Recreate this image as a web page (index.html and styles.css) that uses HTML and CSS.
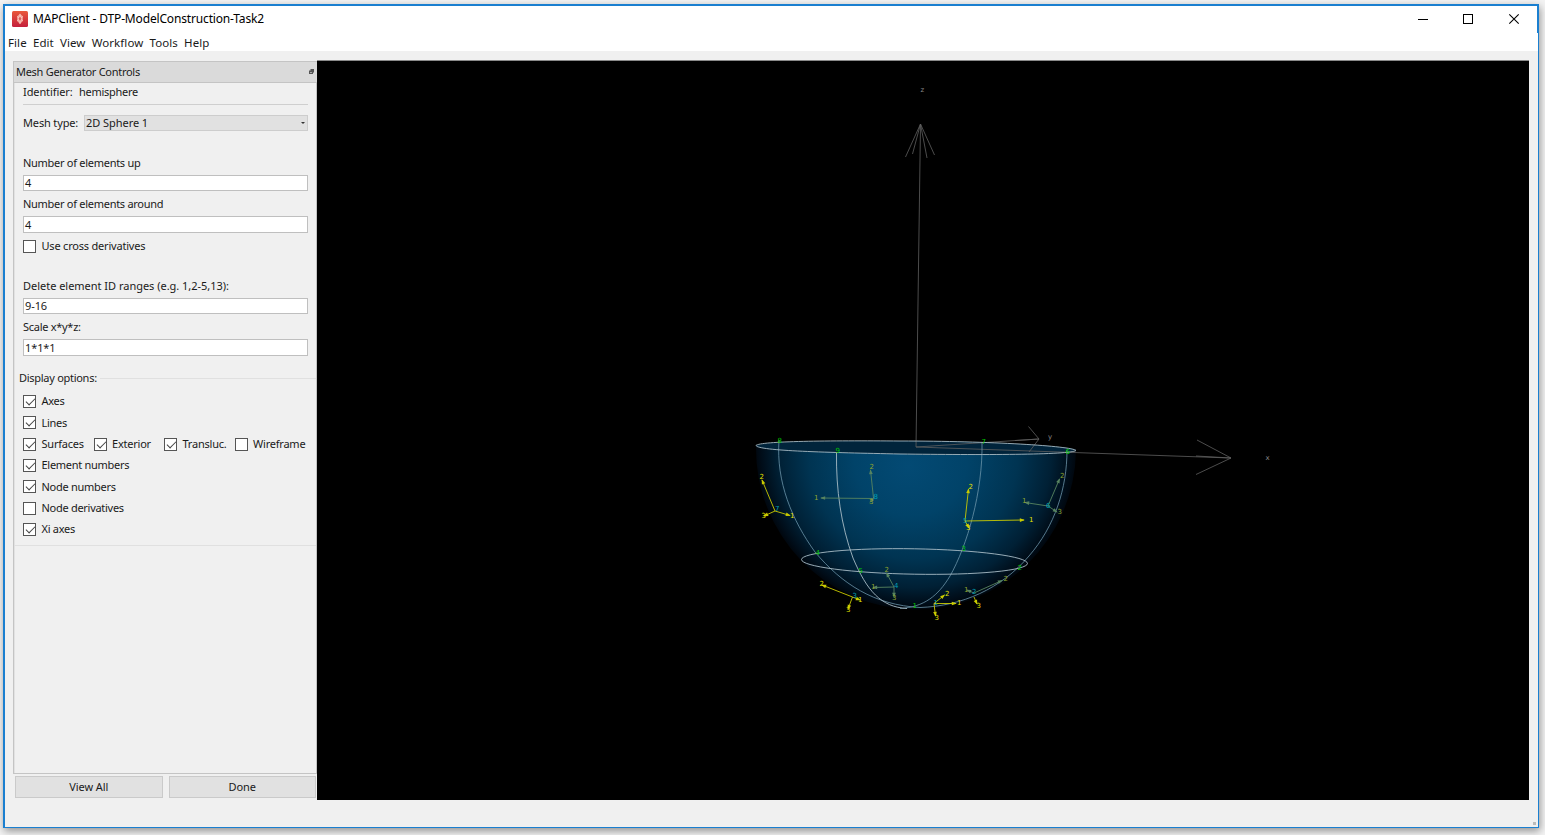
FILE: index.html
```html
<!DOCTYPE html>
<html lang="en">
<head>
<meta charset="utf-8">
<title>MAPClient - DTP-ModelConstruction-Task2</title>
<link rel="stylesheet" href="styles.css">
</head>
<body>
<div class="window">
  <header class="titlebar">
    <svg class="app-icon" width="16" height="16" viewBox="0 0 16 16">
      <defs><linearGradient id="appfill" x1="0" y1="0" x2="0" y2="1"><stop offset="0" stop-color="#e9583a"/><stop offset="1" stop-color="#c4203c"/></linearGradient></defs>
      <rect width="16" height="16" rx="1.5" fill="url(#appfill)"/>
      <path d="M8 2.8 L10.8 5.2 V10 L8 13 L5.2 10 V5.2 Z" fill="#f5a79b"/>
      <path d="M8 2.8 V13 M5.2 5.5 L10.8 9.8 M10.8 5.5 L5.2 9.8" stroke="#fbd5ce" stroke-width=".7"/>
      <ellipse cx="8" cy="7.7" rx=".8" ry="1.8" fill="#d23c3a"/>
    </svg>
    <span class="title">MAPClient - DTP-ModelConstruction-Task2</span>
    <svg class="controls" width="103" height="12" viewBox="0 0 103 12" fill="none" stroke="#000">
      <path d="M0 6.5 H10"/>
      <rect x="45.5" y="1.5" width="9" height="9"/>
      <path d="M91.3 1.3 L100.7 10.7 M100.7 1.3 L91.3 10.7" stroke-width="1.1"/>
    </svg>
  </header>
  <nav class="menubar"><span>File</span><span>Edit</span><span>View</span><span>Workflow</span><span>Tools</span><span>Help</span></nav>
  <main class="content">
    <aside class="dock">
      <div class="dock-title"><span>Mesh Generator Controls</span>
        <svg width="5" height="5" viewBox="0 0 5 5"><path d="M1.5 0 H5 V3.5 H4 V5 H0 V1.5 H1.5 Z" fill="#555"/><path d="M1 3h2v1H1z" fill="#aaa"/></svg>
      </div>
      <div class="panel">
        <div class="row first"><span class="ident-label">Identifier:</span><span>hemisphere</span></div>
        <div class="rule"></div>
        <div class="row mesh-row"><span class="mesh-label">Mesh type:</span><div class="combo"><span>2D Sphere 1</span><i></i></div></div>
        <div class="row spaced">Number of elements up</div>
        <div class="field">4</div>
        <div class="row after">Number of elements around</div>
        <div class="field tall">4</div>
        <div class="row after"><i class="box"></i>Use cross derivatives</div>
        <div class="row spaced wide">Delete element ID ranges (e.g. 1,2-5,13):</div>
        <div class="field">9-16</div>
        <div class="row after">Scale x*y*z:</div>
        <div class="field tall">1*1*1</div>
        <div class="group-title"><span>Display options:</span><i></i></div>
        <div class="options">
          <div class="opt"><i class="box on"></i>Axes</div>
          <div class="opt"><i class="box on"></i>Lines</div>
          <div class="opt quad"><span><i class="box on"></i>Surfaces</span><span><i class="box on"></i>Exterior</span><span><i class="box on"></i>Transluc.</span><span><i class="box"></i>Wireframe</span></div>
          <div class="opt"><i class="box on"></i>Element numbers</div>
          <div class="opt"><i class="box on"></i>Node numbers</div>
          <div class="opt"><i class="box"></i>Node derivatives</div>
          <div class="opt"><i class="box on"></i>Xi axes</div>
        </div>
      </div>
      <div class="buttons"><div class="btn">View All</div><div class="btn">Done</div></div>
    </aside>
    <section class="viewport">
      <svg class="scene" width="1212" height="739" viewBox="317 61 1212 739">
        <defs>
          <radialGradient id="bowl" gradientUnits="userSpaceOnUse" cx="916" cy="448" r="161" fx="908" fy="466">
            <stop offset="0" stop-color="#034a74"/><stop offset=".35" stop-color="#014369"/><stop offset=".65" stop-color="#003452"/><stop offset=".85" stop-color="#002035"/><stop offset=".96" stop-color="#000d19"/><stop offset="1" stop-color="#00060d"/>
          </radialGradient>
          <marker id="tip" viewBox="0 0 6 6" refX="5" refY="3" markerWidth="6" markerHeight="5" orient="auto" markerUnits="userSpaceOnUse"><path d="M0 .8 L6 3 L0 5.200Z" fill="context-stroke"/></marker>
        </defs>
        <path d="M756 446 A160 161 0 0 0 1076 451 C1050 455 980 455 900 454 C830 452 770 451 756 446Z" fill="url(#bowl)"/>
        <path d="M756 446 C760 441 830 441 900 441 C990 441 1070 446 1076 450 C1066 455 980 455 900 454 C830 452 760 451 756 446Z" fill="#01243b"/>
        <g class="axes">
          <path d="M916 447 L920.5 124"/>
          <path d="M905.500 157 L920.500 124 L934.500 155 M912.500 154 L920.500 124 L927 158"/>
          <path d="M916 447 L1231 458"/>
          <path d="M1197 440 L1231 458 L1196 474.500 M1196 456 L1231 458"/>
          <path d="M916 447 L1039 439"/>
          <path d="M1028.500 426.500 L1039 439 L1029 452 M1015 440.500 L1039 439"/>
        </g>
        <g class="axis-text"><text x="920.500" y="92">z</text><text x="1265.500" y="460">x</text><text x="1048" y="439">y</text></g>
        <g class="back">
          <path d="M779 440 C776 482 792 520 815 552 C842 584 874 605 920 607.500 C962 606 1001 589 1029 556 C1055 526 1067 488 1067 450"/>
          <path d="M982 442 C983 492 967 546 950 576 C938 596 924 607 900 608.500"/>
        </g>
        <g class="lines">
          <path d="M836.500 452 C836 490 841 525 853 558 C867 591 881 607 907 608.500"/>
          <path d="M756 445.500 C760 441 830 440.500 900 441 C990 441 1072 446 1076 450.500 C1070 455 980 455 900 454 C830 452.500 758 451 756 445.500Z"/>
          <ellipse cx="914.500" cy="561.500" rx="113" ry="12.700" transform="rotate(1 914.500 561)"/>
        </g>
        <g class="xi dim">
          <path d="M873.500 498 L870.500 470"/><path d="M873.500 498.500 L821 498"/><path d="M873.500 498 L870 502"/>
          <path d="M1048 506 L1059.500 479"/><path d="M1048 506 L1025 502.500"/><path d="M1048 506 L1057 512"/>
          <path d="M894 587 L886.500 573"/><path d="M894 587 L873 587.500"/><path d="M894 587 V597"/>
          <path d="M974 593 L1002 580.500"/><path d="M974 593 L967 590"/>
        </g>
        <g class="xi">
          <path d="M775 511 L762 480"/><path d="M775 511 L790 515.500"/><path d="M775 511 L764 516"/>
          <path d="M965 521 L968.500 489"/><path d="M965 521 L1024 520"/><path d="M965 521 L969 528"/>
          <path d="M852.500 597 L822 585"/><path d="M852.500 597 L860 600"/><path d="M852.500 597 L848 609"/>
          <path d="M934 603.500 L944.500 595"/><path d="M934 603.500 L956 603.500"/><path d="M934 603.500 L935.500 616"/>
          <path d="M974 597 L977 604"/>
        </g>
        <g class="num yellow">
          <text x="759.500" y="478">2</text><text x="790" y="517">1</text><text x="761.500" y="517">3</text>
          <text x="968.500" y="488">2</text><text x="1029" y="521">1</text><text x="966" y="529">3</text>
          <text x="819.500" y="585">2</text><text x="858" y="601">1</text><text x="846" y="611">3</text>
          <text x="945" y="595">2</text><text x="957" y="604">1</text><text x="934.500" y="619">3</text><text x="976.500" y="607">3</text>
        </g>
        <g class="num olive">
          <text x="869.500" y="468">2</text><text x="814" y="499">1</text><text x="869" y="503">3</text>
          <text x="1060" y="477">2</text><text x="1022" y="502">1</text><text x="1057.500" y="513">3</text>
          <text x="884.500" y="571">2</text><text x="871" y="588">1</text><text x="892" y="599">3</text><text x="1003.500" y="580">2</text><text x="964" y="591">1</text>
        </g>
        <g class="num green">
          <text x="777.500" y="442">8</text><text x="835.500" y="452">9</text><text x="981.500" y="443">7</text><text x="1065.500" y="453">6</text>
          <text x="815.500" y="554">4</text><text x="858.500" y="572">5</text><text x="961.500" y="550">3</text><text x="1017.500" y="569">2</text><text x="912.500" y="607">1</text>
        </g>
        <g class="num cyan">
          <text x="873.500" y="498">8</text><text x="775" y="510">7</text><text x="963" y="522">5</text><text x="1046" y="507">6</text>
          <text x="852.500" y="597">3</text><text x="894" y="587">4</text><text x="933.500" y="604">1</text><text x="972" y="593">2</text>
        </g>
      </svg>
    </section>
  </main>
  <footer class="status"><i></i></footer>
</div>
</body>
</html>
```
FILE: styles.css
```css
* { box-sizing: border-box; }
html, body { margin: 0; height: 100%; }
body { padding: 4px 6px 7px 3px; background: #f3f3f3; overflow: hidden; color: #1a1a1a; font: 11px/20px "Noto Sans", "Open Sans", sans-serif; }
.window { height: 824px; display: flex; flex-direction: column; background: #f0f0f0; border: solid #1a7fd0; border-width: 2px 1px 1px 2px; box-shadow: 1px 3px 8px rgba(0,0,0,.4); }
.titlebar { height: 27px; flex: none; display: flex; align-items: center; background: #fff; border-right: 1px solid #1a7fd0; padding: 0 16px 2px 7px; color: #000; font-size: 12px; }
.title { margin-left: 5px; flex: 1; letter-spacing: -.16px; }
.menubar { height: 18px; flex: none; display: flex; gap: 6.2px; padding-left: 3px; background: #fff; font-size: 11.5px; line-height: 19px; letter-spacing: .08px; }
.content { height: 749px; flex: none; display: flex; padding: 9px 9px 0 8px; }
.dock { width: 304px; flex: none; display: flex; flex-direction: column; padding-top: 1px; letter-spacing: -.28px; }
.dock-title { height: 22px; flex: none; display: flex; align-items: center; justify-content: space-between; background: #dadada; border: 1px solid #c4c4c4; border-right: 0; padding: 0 3px 0 2px; }
.dock-title svg { margin-top: -1px; }
.panel { height: 691px; flex: none; border: 1px solid #c4c4c4; border-width: 0 1px 1px 1px; box-shadow: inset 1px 0 #e2e2e2; }
.row { height: 20px; padding-left: 9px; display: flex; align-items: center; }
.first { height: 18px; }
.ident-label { width: 56px; letter-spacing: -.1px; }
.rule { height: 1px; margin: 3px 8px 0 9px; background: #cfcfcf; }
.mesh-row { margin-top: 8px; padding-right: 8px; letter-spacing: -.15px; }
.mesh-label { width: 61px; }
.combo { flex: 1; height: 16px; display: flex; align-items: center; justify-content: space-between; background: #e1e1e1; border: 1px solid #cdcdcd; padding: 0 2px 0 1px; letter-spacing: -.05px; }
.combo i { border: 2px solid transparent; border-top-color: #333; border-bottom: 0; }
.spaced { margin-top: 20px; }
.wide { letter-spacing: -.02px; }
.after { margin-top: 3px; }
.after:has(.box) { letter-spacing: -.2px; }
.field { height: 16px; margin: 2px 8px 0 9px; padding-left: 1px; background: #fff; border: 1px solid #bfbfbf; line-height: 14px; letter-spacing: -.1px; }
.tall { height: 17px; line-height: 15px; }
.box { width: 13px; height: 13px; flex: none; margin-right: 5.5px; background: #fff; border: 1px solid #555; }
.on::after { content: ""; display: block; width: 8px; height: 4px; margin: 2px 0 0 2px; border: solid #444; border-width: 0 0 1px 1px; transform: rotate(-45deg); }
.group-title { height: 20px; margin-top: 12px; padding-left: 5px; display: flex; align-items: center; gap: 3px; }
.group-title i { flex: 1; height: 1px; background: #e0e0e0; }
.options { height: 158px; padding: 2.7px 0 0 9px; border-bottom: 1px solid #e0e0e0; }
.opt { height: 21.35px; display: flex; align-items: center; }
.quad { display: grid; grid-template-columns: 70.5px 70.5px 70.5px 75px; letter-spacing: -.22px; }
.quad span { display: flex; align-items: center; }
.buttons { display: flex; gap: 6px; padding: 2px 1px 0 2px; letter-spacing: -.08px; }
.btn { flex: 1; height: 22px; text-align: center; background: #e1e1e1; border: 1px solid #cacaca; }
.viewport { flex: 1; height: 740px; background: #000; border-top: 1px solid #8a8a8a; }
.scene { display: block; }
.axes { fill: none; stroke: #606060; stroke-width: .8; }
.axis-text { fill: #888; font: 7px "DejaVu Sans", sans-serif; }
.back { fill: none; stroke: #6b94aa; stroke-width: .8; }
.lines { fill: none; stroke: #a7bbc5; stroke-width: .9; }
.xi { fill: none; stroke: #c9cb00; stroke-width: .9; }
.xi path { marker-end: url(#tip); }
.dim { stroke: #578460; }
.num { font: 7px "DejaVu Sans", sans-serif; transform: translateY(.5px); }
.yellow { fill: #e2e200; }
.olive { fill: #8fa62e; }
.green { fill: #00c800; }
.cyan { fill: #00a0b4; }
.status { flex: 1; display: flex; justify-content: flex-end; align-items: flex-end; padding: 0 2px 2px; }
.status i { width: 3px; height: 3px; background: #bbb; }
```
